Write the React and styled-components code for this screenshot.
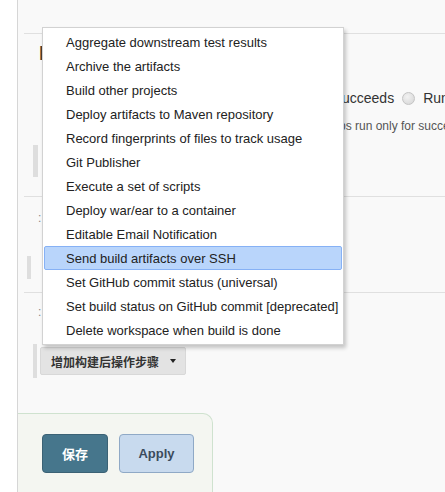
import React from 'react';
import styled, { createGlobalStyle } from 'styled-components';

const GlobalStyle = createGlobalStyle`
  html, body {
    margin: 0;
    padding: 0;
    background: #fff;
    font-family: "Liberation Sans", Arial, "Noto Sans CJK SC", sans-serif;
    color: #333;
  }
`

const Page = styled.div`
  position: relative;
  display: flex;
  width: 445px;
  height: 492px;
  overflow: hidden;
`

const Side = styled.div`
  width: 17px;
  flex: none;
  background: #fff;
  border-right: 1px solid #d6d6d6;
`

const Main = styled.div`
  flex: 1;
  display: flex;
  flex-direction: column;
  background: #f9f9f9;
  overflow: hidden;
`

const TopGap = styled.div`
  height: 33px;
  flex: none;
`

const Section = styled.div`
  margin-left: 6px;
  height: ${p => p.h}px;
  flex: none;
  border-top: 1px solid #e0e0e0;
  display: flex;
  flex-direction: column;
`

const Heading = styled.div`
  margin: 7px 0 0 15px;
  font-size: 20px;
  line-height: 24px;
  font-weight: bold;
  color: #4a3b30;
  white-space: nowrap;
`

const OptionRow = styled.div`
  margin: 24px 0 0 318px;
  display: flex;
  align-items: center;
  gap: 8px;
  font-size: 14px;
  line-height: 18px;
  white-space: nowrap;
  color: #333;
`

const Radio = styled.span`
  width: 11px;
  height: 11px;
  border-radius: 50%;
  border: 1px solid #c4c4c4;
  background: radial-gradient(circle at 40% 35%, #f2f2f2, #d4d4d4);
  flex: none;
`

const Desc = styled.div`
  margin: 11px 0 0 315px;
  font-size: 12px;
  line-height: 16px;
  color: #555;
  white-space: nowrap;
`

const Handle = styled.div`
  width: ${p => p.w || 5}px;
  height: ${p => p.h}px;
  margin-left: ${p => p.x}px;
  margin-top: ${p => p.y}px;
  background: #dedede;
  flex: none;
`

const Label = styled.div`
  margin: ${p => p.y}px 0 0 14px;
  font-size: 12px;
  line-height: 14px;
  color: #888;
  white-space: nowrap;
`

const ActionRow = styled.div`
  display: flex;
  align-items: flex-start;
  margin-top: 25px;
`

const AddButton = styled.div`
  margin: 3px 0 0 3px;
  height: 28px;
  width: 146px;
  box-sizing: border-box;
  display: flex;
  align-items: center;
  padding-left: 10px;
  gap: 11px;
  background: #e3e3e3;
  border: 1px solid #d8d8d8;
  border-radius: 2px;
  font-family: "Noto Sans CJK SC", sans-serif;
  font-size: 12px;
  font-weight: bold;
  color: #333;
`

const Caret = styled.span`
  width: 0;
  height: 0;
  border-left: 3.5px solid transparent;
  border-right: 3.5px solid transparent;
  border-top: 4px solid #222;
`

const BottomBar = styled.div`
  margin-top: auto;
  width: 195px;
  height: 79px;
  box-sizing: border-box;
  flex: none;
  background: #f4f6f1;
  border-top: 1px solid #cfe2cf;
  border-right: 1px solid #cfe2cf;
  border-top-right-radius: 10px;
  display: flex;
  align-items: flex-start;
  gap: 11px;
  padding: 20px 0 0 24px;
`

const Button = styled.div`
  height: 39px;
  width: ${p => p.w}px;
  box-sizing: border-box;
  display: flex;
  align-items: center;
  justify-content: center;
  border-radius: 4px;
  font-size: 13px;
  font-weight: bold;
  background: ${p => (p.primary ? '#46768c' : '#c8daee')};
  border: 1px solid ${p => (p.primary ? '#3b6275' : '#8fa9c6')};
  color: ${p => (p.primary ? '#fff' : '#3b4b5c')};
  font-family: ${p => (p.primary ? '"Noto Sans CJK SC", sans-serif' : '"Liberation Sans", Arial, sans-serif')};
`

const Menu = styled.ul`
  position: absolute;
  left: 42px;
  top: 27px;
  width: 302px;
  box-sizing: border-box;
  margin: 0;
  padding: 2px 1px;
  list-style: none;
  background: #fff;
  border: 1px solid #d2d2d2;
  box-shadow: 2px 3px 4px rgba(0, 0, 0, 0.22);
`

const Item = styled.li`
  height: 24px;
  box-sizing: border-box;
  display: flex;
  align-items: center;
  padding-left: 21px;
  font-size: 13px;
  color: #222;
  white-space: nowrap;
  border: 1px solid ${p => (p.active ? '#86b1f5' : 'transparent')};
  border-radius: 2px;
  background: ${p => (p.active ? '#b9d5fb' : 'transparent')};
`

const items = [
  'Aggregate downstream test results',
  'Archive the artifacts',
  'Build other projects',
  'Deploy artifacts to Maven repository',
  'Record fingerprints of files to track usage',
  'Git Publisher',
  'Execute a set of scripts',
  'Deploy war/ear to a container',
  'Editable Email Notification',
  'Send build artifacts over SSH',
  'Set GitHub commit status (universal)',
  'Set build status on GitHub commit [deprecated]',
  'Delete workspace when build is done',
];

const App = () => (
  <Page>
    <GlobalStyle />
    <Side />
    <Main>
      <TopGap />
      <Section h={162}>
        <Heading>Build other projects</Heading>
        <OptionRow>
          <span>ucceeds</span>
          <Radio />
          <span>Run regardless of build result</span>
        </OptionRow>
        <Desc>bs run only for successful builds</Desc>
        <Handle x={9} y={11} h={32} />
      </Section>
      <Section h={95}>
        <Label y={14}>:</Label>
        <Handle x={3} y={31} w={4} h={23} />
      </Section>
      <Section h={120}>
        <Label y={12}>:</Label>
        <ActionRow>
          <Handle x={9} y={0} w={4} h={34} />
          <AddButton>
            增加构建后操作步骤
            <Caret />
          </AddButton>
        </ActionRow>
      </Section>
      <BottomBar>
        <Button primary w={66}>保存</Button>
        <Button w={75}>Apply</Button>
      </BottomBar>
    </Main>
    <Menu>
      {items.map((t, i) => (
        <Item key={t} active={i === 9}>{t}</Item>
      ))}
    </Menu>
  </Page>
);

export default App;
